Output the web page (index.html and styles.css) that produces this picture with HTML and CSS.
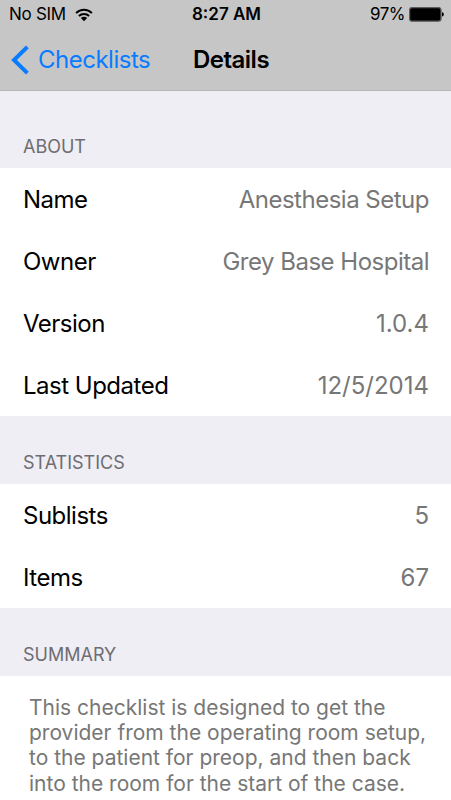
FILE: index.html
```html
<!DOCTYPE html>
<html lang="en">
<head>
<meta charset="utf-8">
<title>Details</title>
<link rel="stylesheet" href="styles.css">
</head>
<body>
<header class="bar">
  <div class="status">
    <div class="carrier"><span>No SIM</span>
      <svg class="wifi" width="18" height="14" viewBox="0 0 18 14"><path d="M1.1 5.1a11.2 11.2 0 0 1 15.8 0M3.9 8a7.2 7.2 0 0 1 10.2 0" fill="none" stroke="#000" stroke-width="2"/><path d="M9 13.3 5.8 10.1a4.5 4.5 0 0 1 6.4 0z"/></svg>
    </div>
    <div class="time">8:27 AM</div>
    <div class="power"><span>97%</span>
      <svg class="battery" width="35" height="15" viewBox="0 0 35 15"><rect x=".6" y=".6" width="31.4" height="13.6" rx="2.4" fill="#000" stroke="#5d5d5d" stroke-width="1.3"/><path d="M33 5.3q1.8 0 1.8 2.1T33 9.5z"/></svg>
    </div>
  </div>
  <nav class="nav">
    <a class="back"><svg width="18" height="30" viewBox="0 0 18 30"><path d="M16.4 1.8 3 15l13.4 13.2" fill="none" stroke="#087cff" stroke-width="4"/></svg><span>Checklists</span></a>
    <h1 class="title">Details</h1>
  </nav>
</header>
<main>
  <h2 class="section first"><span>ABOUT</span></h2>
  <dl class="list">
    <div class="row"><dt>Name</dt><dd>Anesthesia Setup</dd></div>
    <div class="row"><dt>Owner</dt><dd>Grey Base Hospital</dd></div>
    <div class="row"><dt>Version</dt><dd class="num">1.0.4</dd></div>
    <div class="row"><dt>Last Updated</dt><dd class="num">12/5/2014</dd></div>
  </dl>
  <h2 class="section"><span>STATISTICS</span></h2>
  <dl class="list">
    <div class="row"><dt>Sublists</dt><dd class="num">5</dd></div>
    <div class="row"><dt>Items</dt><dd class="num">67</dd></div>
  </dl>
  <h2 class="section"><span>SUMMARY</span></h2>
  <p class="summary">This checklist is designed to get the<br>provider from the operating room setup,<br>to the patient for preop, and then back<br>into the room for the start of the case.</p>
</main>
</body>
</html>
```
FILE: styles.css
```css
* { box-sizing: border-box; margin: 0; padding: 0; }
body { width: 451px; height: 800px; overflow: hidden; background: #fff; font-family: Inter, "Liberation Sans", sans-serif; color: #000; }
svg { display: block; flex: none; }
.bar { height: 91px; background: #c6c6c6; border-bottom: 1px solid #b5b5b7; }
.status { height: 29px; display: grid; grid-template-columns: 1fr auto 1fr; align-items: center; padding: 0 7px 0 9px; font-size: 17px; line-height: 29px; }
.carrier, .power { display: flex; align-items: center; }
.carrier { gap: 9px; letter-spacing: -0.3px; }
.power { justify-content: flex-end; gap: 4px; letter-spacing: -0.5px; }
.time { font-weight: 600; }
.nav { height: 61px; display: grid; grid-template-columns: 1fr auto 1fr; align-items: center; padding-left: 11px; font-size: 24px; }
.back { display: flex; align-items: center; gap: 9px; color: #087cff; letter-spacing: -0.5px; }
.title { font-size: 24px; font-weight: 600; letter-spacing: -0.5px; }
.section { height: 68px; padding: 0 23px; display: flex; align-items: flex-end; background: #efeef4; color: #6d6d72; font-size: 18px; font-weight: 400; line-height: 22px; padding-bottom: 10px; }
.section.first { height: 77px; }
.row { height: 62px; padding: 0 22px 0 23px; display: flex; justify-content: space-between; align-items: center; font-size: 24px; letter-spacing: -0.5px; }
.row dd { color: #777; }
.row .num { letter-spacing: 0; }
.summary { padding: 19px 0 0 29px; color: #777; font-size: 21px; line-height: 25.2px; white-space: nowrap; }
```
